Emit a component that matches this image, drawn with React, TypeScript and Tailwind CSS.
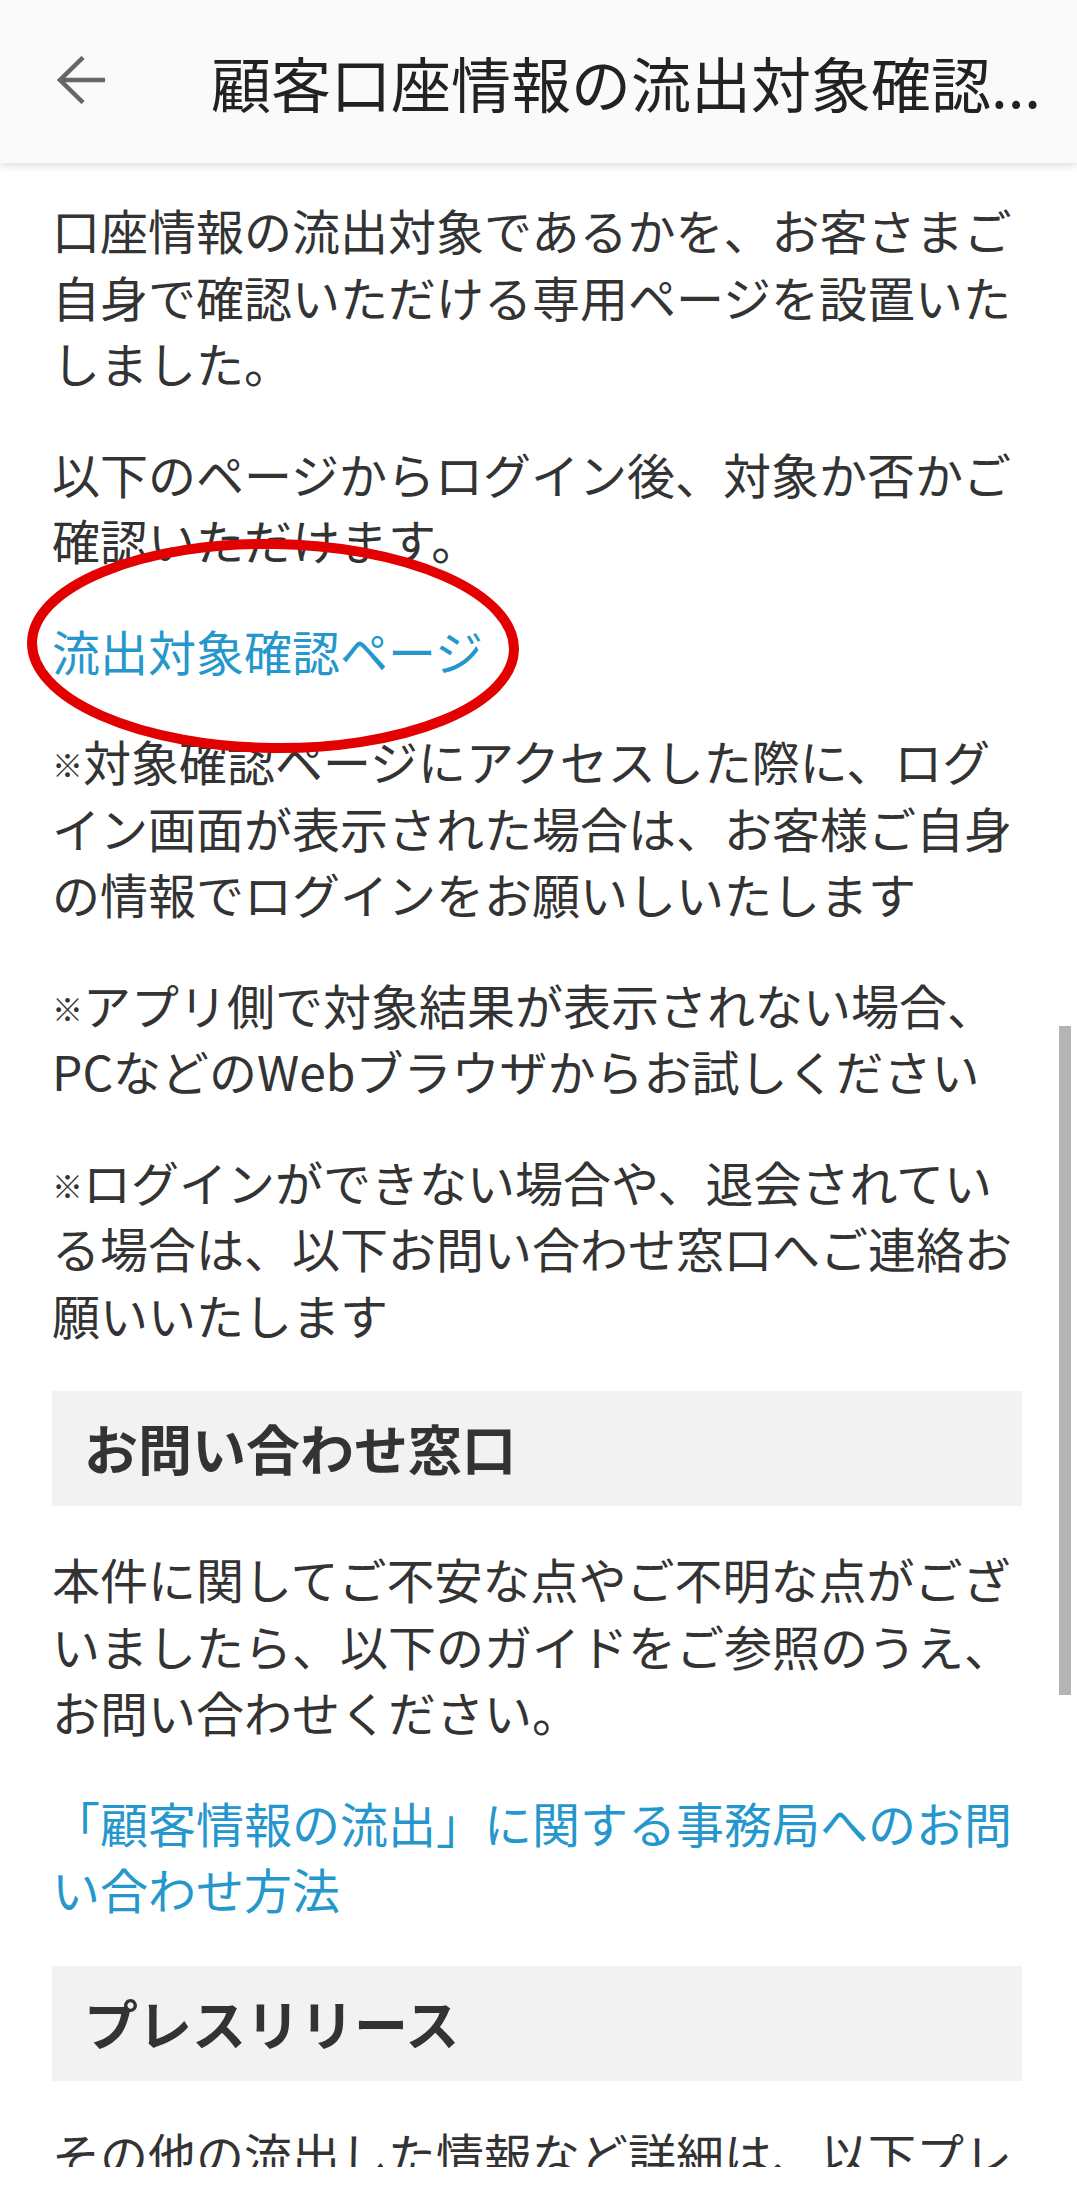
import React from 'react';

const Note = () => (
  <span className="relative -top-[4px] inline-block w-[31px] text-center text-[31px] leading-none">※</span>
);

const Heading = ({ children }: { children: React.ReactNode }) => (
  <div className="mb-[39px] flex h-[115px] items-center bg-[#f2f2f2] pl-[32px] text-[54px] font-bold text-[#333]">
    {children}
  </div>
);

export default function App() {
  return (
    <div className="relative h-[2207px] w-[1077px] overflow-hidden bg-white font-['Noto_Sans_CJK_JP',sans-serif] text-[#333]">
      <header className="relative z-10 flex h-[163px] items-center bg-[#fafafa] pl-[56px] shadow-[0_3px_8px_rgba(0,0,0,0.12)]">
        <svg width="50" height="48" viewBox="0 0 50 48" className="relative -top-[2px] shrink-0">
          <path d="M49 24H4M27 1.5L4 24l23 22.5" fill="none" stroke="#666" strokeWidth="4.5" />
        </svg>
        <h1 className="ml-[105px] overflow-hidden whitespace-nowrap text-[60px] font-normal text-[#222]">
          顧客口座情報の流出対象確認...
        </h1>
      </header>

      <main className="h-[2004px] overflow-hidden pl-[52px] pr-[55px] pt-[33px] text-[48px] leading-[66.5px]">
        <p className="mb-[44px]">
          口座情報の流出対象であるかを、お客さまご<br />
          自身で確認いただける専用ページを設置いた<br />
          しました。
        </p>
        <p className="mb-[44px]">
          以下のページからログイン後、対象か否かご<br />
          確認いただけます。
        </p>
        <p className="mb-[44px] text-[#2597cd]">流出対象確認ページ</p>
        <p className="mb-[44px]">
          <Note />対象確認ページにアクセスした際に、ログ<br />
          イン画面が表示された場合は、お客様ご自身<br />
          の情報でログインをお願いしいたします
        </p>
        <p className="mb-[44px]">
          <Note />アプリ側で対象結果が表示されない場合、<br />
          PCなどのWebブラウザからお試しください
        </p>
        <p className="mb-[44px]">
          <Note />ログインができない場合や、退会されてい<br />
          る場合は、以下お問い合わせ窓口へご連絡お<br />
          願いいたします
        </p>
        <Heading>お問い合わせ窓口</Heading>
        <p className="mb-[44px]">
          本件に関してご不安な点やご不明な点がござ<br />
          いましたら、以下のガイドをご参照のうえ、<br />
          お問い合わせください。
        </p>
        <p className="mb-[44px] text-[#2597cd]">
          「顧客情報の流出」に関する事務局へのお問<br />
          い合わせ方法
        </p>
        <Heading>プレスリリース</Heading>
        <p className="mb-[44px]">
          その他の流出した情報など詳細は、以下プレ<br />
          スリリースをご確認ください。
        </p>
      </main>

      {/* red hand-drawn circle around the link */}
      <svg className="absolute left-[20px] top-[530px]" width="520" height="240" viewBox="0 0 520 240">
        <ellipse cx="253" cy="116" rx="241" ry="102" fill="none" stroke="#e30000" strokeWidth="10" transform="rotate(0.8 253 116)" />
      </svg>

      <div className="absolute right-[6px] top-[1026px] h-[669px] w-[12px] bg-[#b4b4b4]" />
    </div>
  );
}
